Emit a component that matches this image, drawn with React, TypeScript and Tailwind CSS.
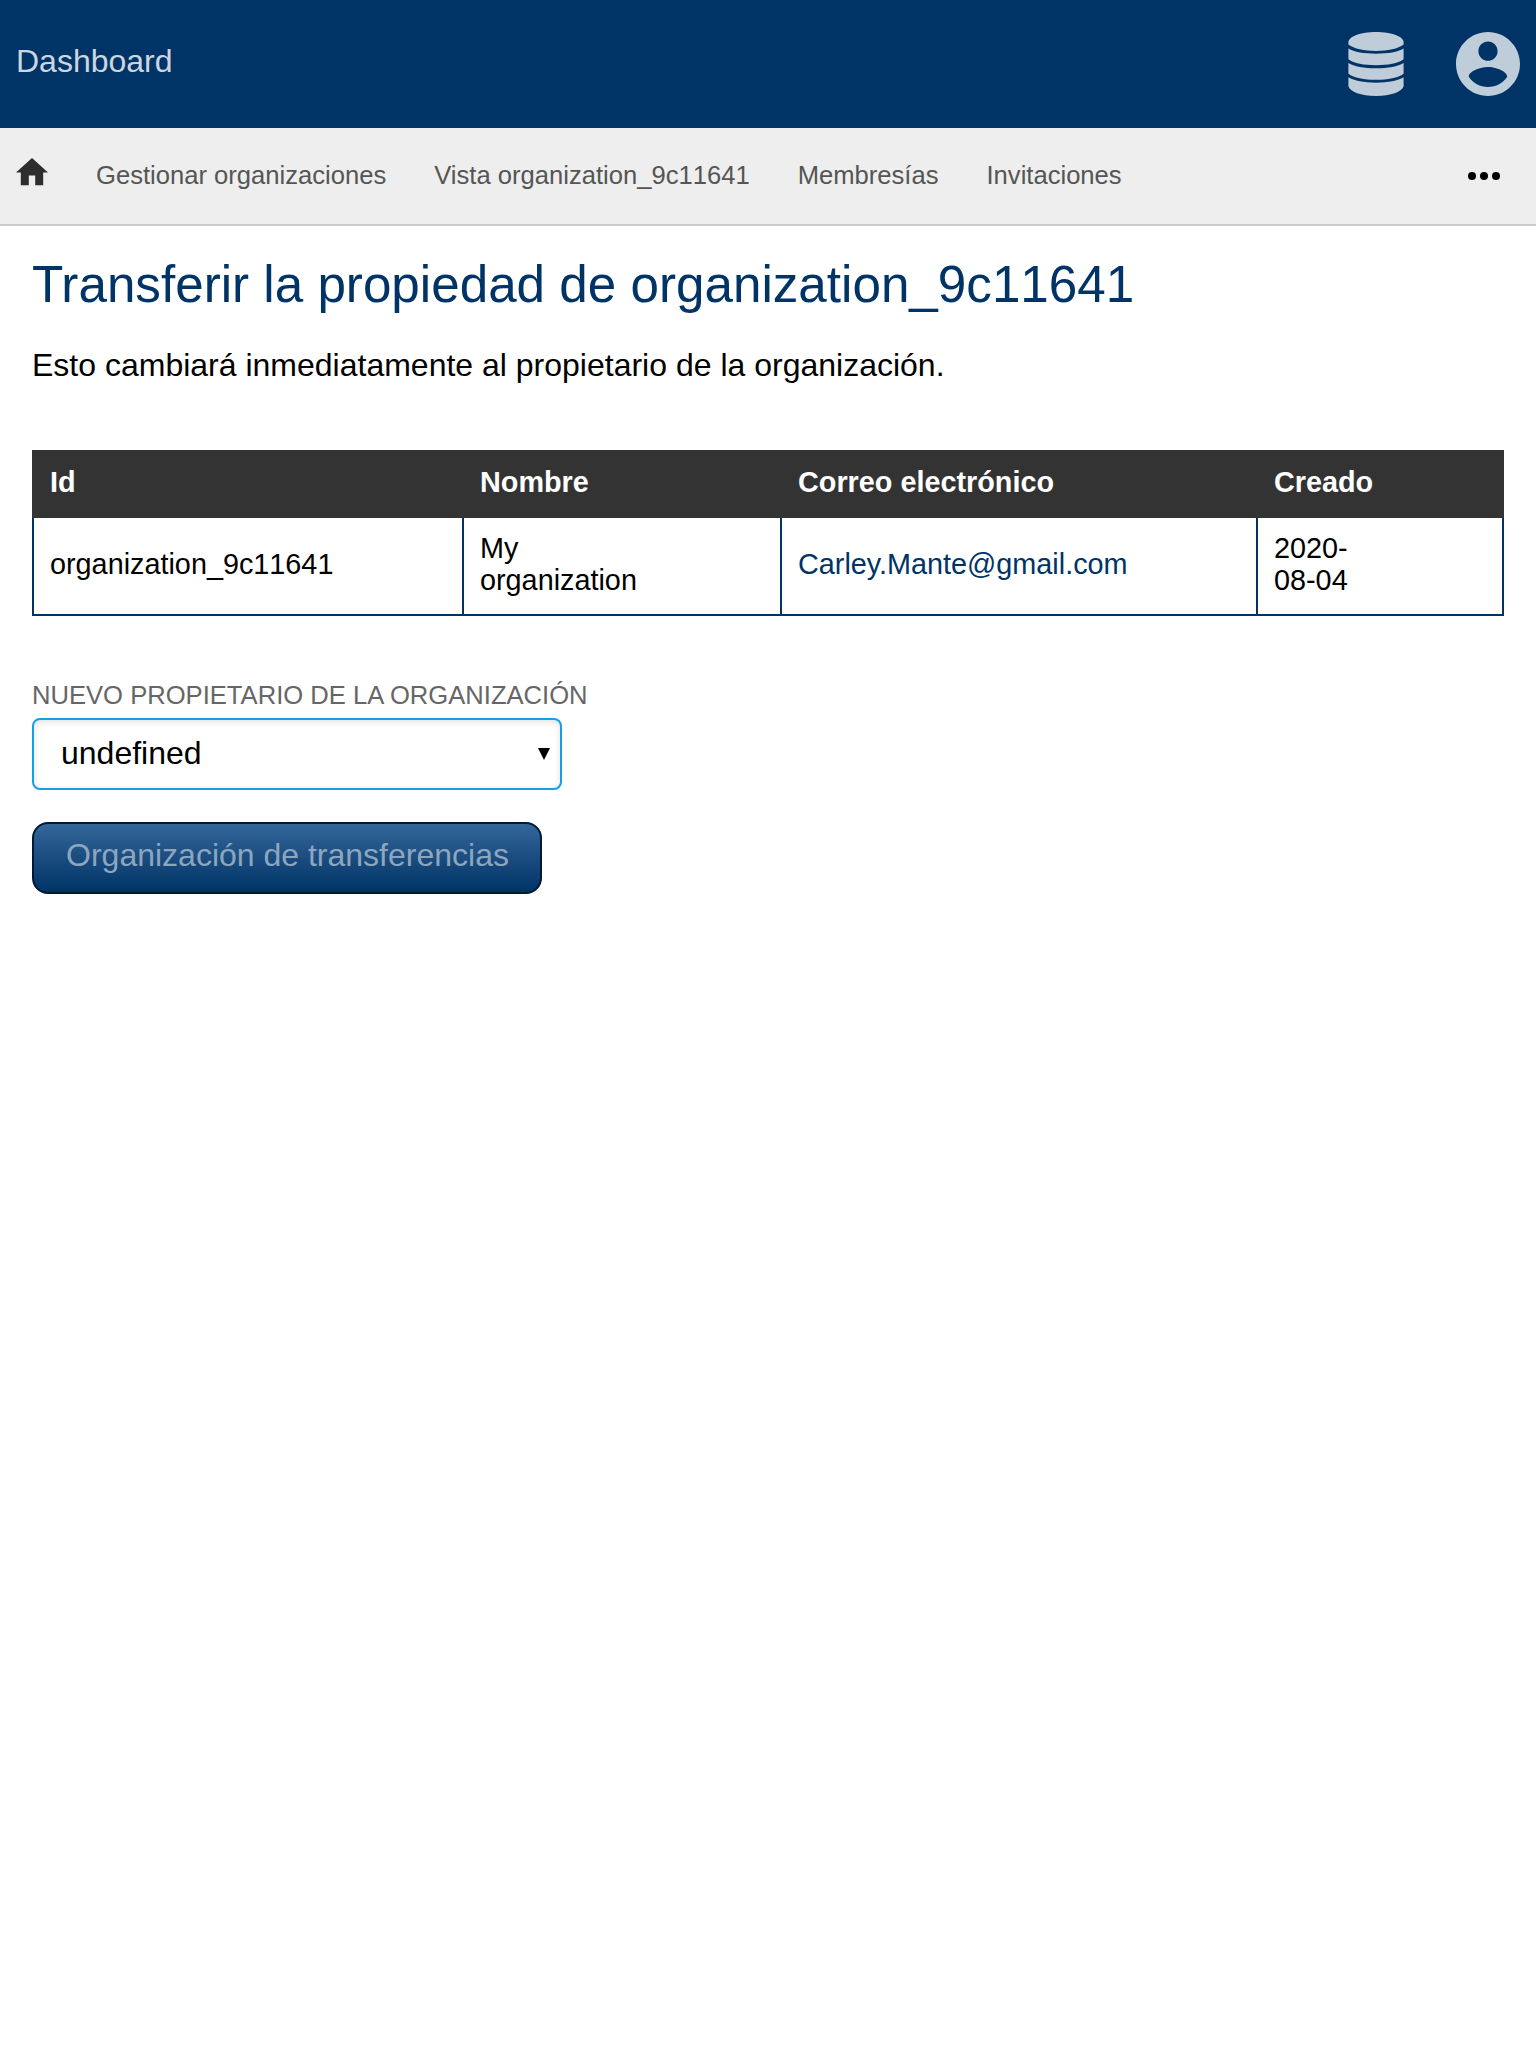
const organizationId = "organization_9c11641";

function DatabaseIcon() {
  return (
    <svg className="h-16 w-14" viewBox="0 0 56 64" fill="currentColor">
      <path d="M28 0C43.500 0 55.600 4.500 55.600 10.300V12.500C50 16.800 40 18.900 28 18.900S6 16.800.400 12.500V10.300C.400 4.500 12.500 0 28 0z" />
      <path d="M.400 16.600C6 20 16 21.800 28 21.800S50 20 55.600 16.600V27.300C50 31.500 40 33.200 28 33.200S6 31.500.400 27.300z" />
      <path d="M.400 31C6 34.500 16 36.300 28 36.300S50 34.500 55.600 31V41.800C50 46 40 47.800 28 47.800S6 46 .400 41.800z" />
      <path d="M.400 45.300C6 48.800 16 50.700 28 50.700S50 48.800 55.600 45.300V54.300C54 59.800 43 64 28 64S2 59.800.400 54.300z" />
    </svg>
  );
}

function AccountIcon() {
  return (
    <svg className="h-16 w-16" viewBox="2 2 20 20" fill="currentColor">
      <path d="M12 2C6.48 2 2 6.48 2 12s4.48 10 10 10 10-4.48 10-10S17.52 2 12 2zm0 3c1.66 0 3 1.34 3 3s-1.34 3-3 3-3-1.34-3-3 1.34-3 3-3zm0 14.2c-2.5 0-4.71-1.28-6-3.22.03-1.99 4-3.08 6-3.08 1.99 0 5.97 1.09 6 3.08-1.29 1.94-3.5 3.22-6 3.22z" />
    </svg>
  );
}

function OrganizationId() {
  return <span className="[font-kerning:none]">{organizationId}</span>;
}

export default function App() {
  return (
    <div className="min-h-[2048px] bg-white font-['Liberation_Sans',Arial,sans-serif] text-[32px] leading-9 text-black">
      <header className="flex h-32 items-center justify-between bg-[#003366] px-4">
        <a className="-mt-1.5 text-[#ccd6e0]">Dashboard</a>
        <div className="flex items-center gap-[52px] text-[#bfccd9]">
          <DatabaseIcon />
          <AccountIcon />
        </div>
      </header>

      <nav className="flex h-[98px] items-center gap-12 border-b-2 border-[#cccccc] bg-[#eeeeee] pl-4 pr-9 text-[25.6px] text-[#555555]">
        <svg className="-mt-2 h-[27.2px] w-8 text-[#2d2d2d]" viewBox="2 3 20 17" fill="currentColor">
          <path d="M10 20v-6h4v6h5v-8h3L12 3 2 12h3v8z" />
        </svg>
        <a className="-mt-0.5">Gestionar organizaciones</a>
        <a className="-mt-0.5">
          Vista <OrganizationId />
        </a>
        <a className="-mt-0.5">Membresías</a>
        <a className="-mt-0.5">Invitaciones</a>
        <svg className="ml-auto h-2 w-8 text-black" viewBox="4 10 16 4" fill="currentColor">
          <circle cx="6" cy="12" r="2" />
          <circle cx="12" cy="12" r="2" />
          <circle cx="18" cy="12" r="2" />
        </svg>
      </nav>

      <main className="px-8 pt-[31px]">
        <h1 className="text-[51.2px] leading-[56px] text-[#003366]">
          Transferir la propiedad de <OrganizationId />
        </h1>
        <p className="mt-[34px]">Esto cambiará inmediatamente al propietario de la organización.</p>

        <table className="mt-[67px] w-full table-fixed border-separate border-spacing-0 text-left text-[28.8px] leading-8">
          <colgroup>
            <col className="w-[430px]" />
            <col className="w-[318px]" />
            <col className="w-[476px]" />
            <col className="w-[248px]" />
          </colgroup>
          <thead className="bg-[#333333] text-white">
            <tr className="h-[68px]">
              <th className="px-[18px] pb-1">Id</th>
              <th className="px-[18px] pb-1">Nombre</th>
              <th className="px-[18px] pb-1">Correo electrónico</th>
              <th className="px-[18px] pb-1">Creado</th>
            </tr>
          </thead>
          <tbody>
            <tr className="h-[98px]">
              <td className="border-b-2 border-l-2 border-[#003366] px-4 pb-1">
                <OrganizationId />
              </td>
              <td className="border-b-2 border-l-2 border-[#003366] px-4 pb-1">
                My
                <br />
                organization
              </td>
              <td className="border-b-2 border-l-2 border-[#003366] px-4 pb-1">
                <a className="text-[#003366]">Carley.Mante@gmail.com</a>
              </td>
              <td className="border-x-2 border-b-2 border-[#003366] px-4 pb-1">
                2020-
                <br />
                08-04
              </td>
            </tr>
          </tbody>
        </table>

        <form className="mt-[63px] flex flex-col items-start">
          <label className="text-[25.6px] leading-8 text-[#666666] uppercase">
            Nuevo propietario de la organización
          </label>
          <button
            type="button"
            className="mt-[7px] flex h-[72px] w-[530px] items-center justify-between rounded-lg border-2 border-[#149fe6] bg-white pr-2.5 pl-[27px] shadow-[inset_0_2px_6px_rgba(0,0,0,0.12)]"
          >
            <span className="pb-0.5">undefined</span>
            <svg className="h-3 w-3" viewBox="0 0 12 12">
              <path d="M0 0h12L6 12z" />
            </svg>
          </button>
          <button
            type="button"
            className="mt-8 h-[72px] w-[510px] rounded-2xl border-2 border-[#001a33] bg-linear-to-b from-[#336699] to-[#003366] pb-1.5 pl-px text-center text-[#8ca6bf]"
          >
            Organización de transferencias
          </button>
        </form>
      </main>
    </div>
  );
}
